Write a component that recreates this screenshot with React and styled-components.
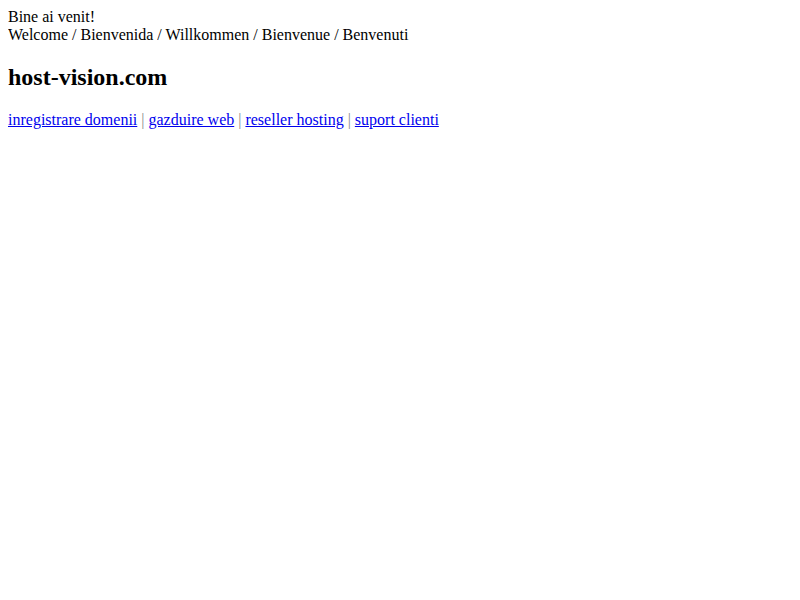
import styled, { createGlobalStyle } from "styled-components";

const GlobalStyle = createGlobalStyle`
  body {
    margin: 8px;
    background: #fff;
    color: #000;
    font-family: "Liberation Serif", "Times New Roman", serif;
    font-size: 16px;
  }
`;

const Greeting = styled.div`
  line-height: normal;
`;

const SiteName = styled.h2`
  font-size: 1.5em;
  font-weight: bold;
  margin: 0.83em 0;
`;

const NavLine = styled.p`
  margin: 1em 0;
`;

const NavLink = styled.a`
  color: #0000ee;
  text-decoration: underline;
`;

const Separator = styled.span`
  color: #888;
`;

const links = [
  "inregistrare domenii",
  "gazduire web",
  "reseller hosting",
  "suport clienti",
];

const App = () => {
  return (
    <>
      <GlobalStyle />
      <Greeting>
        Bine ai venit!
        <br />
        Welcome / Bienvenida / Willkommen / Bienvenue / Benvenuti
      </Greeting>
      <SiteName>host-vision.com</SiteName>
      <NavLine>
        {links.map((label, i) => (
          <span key={label}>
            {i > 0 && <Separator> | </Separator>}
            <NavLink href="#">{label}</NavLink>
          </span>
        ))}
      </NavLine>
    </>
  );
};

export default App;
